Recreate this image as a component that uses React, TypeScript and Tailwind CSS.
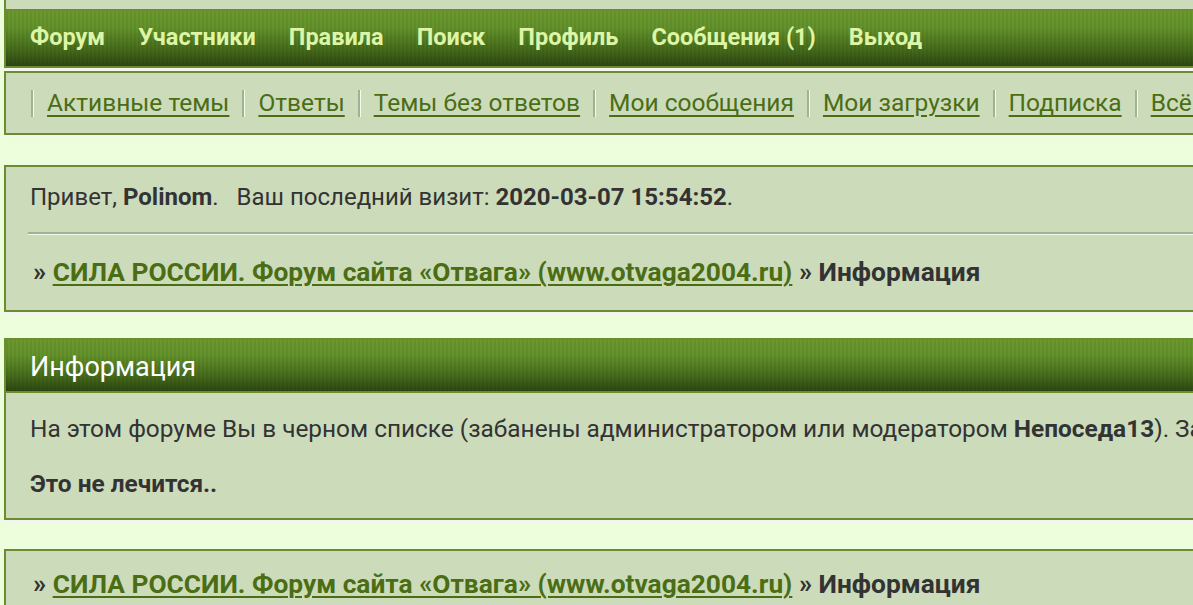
import React from 'react';

const navItems = ['Форум', 'Участники', 'Правила', 'Поиск', 'Профиль', 'Сообщения (1)', 'Выход'];
const subItems = ['Активные темы', 'Ответы', 'Темы без ответов', 'Мои сообщения', 'Мои загрузки', 'Подписка', 'Всё прочитано'];

const bar =
  'bg-[repeating-linear-gradient(to_right,rgba(0,0,0,0.06)_0px,rgba(0,0,0,0.06)_2px,transparent_2px,transparent_4px),linear-gradient(to_bottom,#6b9a2f_0%,#64922b_30%,#44691a_72%,#2e4712_100%)]';

const Separator = () => (
  <span className="inline-block h-[27px] w-[3px] border-l-2 border-[#a3b092] border-r border-r-[#f4fbe9] mx-[13px] align-middle" />
);

const Breadcrumb = () => (
  <div className="text-[26.3px] leading-[30px] font-bold text-[#333] whitespace-nowrap">
    » <a href="#" className="text-[#4b6d14] underline decoration-2 underline-offset-[3px]">СИЛА РОССИИ. Форум сайта «Отвага» (www.otvaga2004.ru)</a> » Информация
  </div>
);

export default function App() {
  return (
    <div className="h-[605px] w-[1193px] overflow-hidden bg-[#ecfedc] font-['Roboto',sans-serif] text-[#333]">
      <div className="w-[1400px] pl-[4px]">
        {/* header box */}
        <div className="border-x-2 border-b-2 border-[#6b8c2f] bg-[#ccdcbb] shadow-[0_3px_0_#f3f6ef]">
          <div className="h-[9px]" />
          <nav className={`flex h-[57px] items-center gap-[33px] border-t-2 border-[#6b8c2f] px-[24px] pb-[3px] ${bar}`}>
            {navItems.map((item) => (
              <a key={item} href="#" className="text-[23.5px] leading-[28px] font-bold text-[#ddf5a6] whitespace-nowrap">
                {item}
              </a>
            ))}
          </nav>
        </div>

        <div className="mt-[3px] flex h-[64px] items-center border-2 border-[#6b8c2f] bg-[#ccdcbb] pl-[12px] shadow-[0_3px_0_#f3f6ef]">
          {subItems.map((item) => (
            <React.Fragment key={item}>
              <Separator />
              <a href="#" className="text-[24.5px] leading-[28px] text-[#4b6d14] underline underline-offset-[4px] whitespace-nowrap">
                {item}
              </a>
            </React.Fragment>
          ))}
        </div>

        <div className="mt-[30px] border-2 border-[#6b8c2f] bg-[#ccdcbb] pl-[22px] pr-4 shadow-[0_3px_0_#f3f6ef]">
          <div className="pt-[16px] pb-[21px] pl-[2px] text-[24px] leading-[28px] whitespace-nowrap">
            Привет, <b>Polinom</b>.&nbsp;&nbsp; Ваш последний визит: <b>2020-03-07 15:54:52</b>.
          </div>
          <div className="border-t-2 border-[#a4b094] border-b border-b-[#f2f9ea]" />
          <div className="pt-[22px] pb-[23px] pl-[5px]">
            <Breadcrumb />
          </div>
        </div>

        <div className="mt-[26px] border-2 border-[#6b8c2f] bg-[#ccdcbb] shadow-[0_3px_0_#f3f6ef]">
          <div className={`flex h-[53px] items-center border-b-2 border-[#6b8c2f] px-[24px] pt-[3px] text-[27px] text-white ${bar}`}>
            Информация
          </div>
          <div className="px-[24px] pt-[22px] pb-[20px] text-[24.4px] leading-[28px]">
            <p className="whitespace-nowrap">
              На этом форуме Вы в черном списке (забанены администратором или модератором <b>Непоседа13</b>). За что - не написано.
            </p>
            <p className="mt-[27px] font-bold">Это не лечится..</p>
          </div>
        </div>

        <div className="mt-[29px] border-2 border-[#6b8c2f] bg-[#ccdcbb] pl-[27px] pt-[18px] pb-[22px]">
          <Breadcrumb />
        </div>
      </div>
    </div>
  );
}
